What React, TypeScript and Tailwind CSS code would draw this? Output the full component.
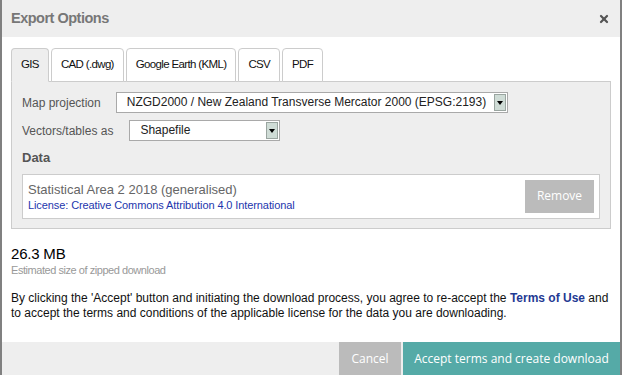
import { X } from "lucide-react";

const tabs = ["GIS", "CAD (.dwg)", "Google Earth (KML)", "CSV", "PDF"];

function SelectBox({ value, className }: { value: string; className: string }) {
    return (
        <div className={`flex h-[21px] items-stretch border border-[#a9a9a9] bg-white ${className}`}>
            <span className="flex-1 truncate pl-[10px] pr-1 text-[12px] leading-[19px] text-[#222]">{value}</span>
            <span className="m-px flex w-[12px] items-center justify-center border border-[#9aa5a0] bg-[#cfdcd6]">
                <span className="border-x-[3px] border-t-[4px] border-x-transparent border-t-black" />
            </span>
        </div>
    );
}

export default function App() {
    return (
        <div className="flex h-[375px] w-[622px] flex-col border-x-2 border-[#808080] bg-white font-['Liberation_Sans',Arial,sans-serif]">
            <div className="flex h-[37px] shrink-0 items-center justify-between bg-[#eeeeee] pl-[9px] pr-[10px]">
                <h1 className="text-[14.5px] font-bold tracking-[-0.5px] text-[#777]">Export Options</h1>
                <X className="h-[12px] w-[12px] text-[#555]" strokeWidth={4.5} />
            </div>

            <div className="flex flex-col px-[9px] pt-[11px]">
                <div className="flex gap-[2px]">
                    {tabs.map((t, i) => (
                        <div
                            key={t}
                            className={`relative -mb-px flex h-[34px] items-center rounded-t-[4px] border border-[#ccc] px-[9px] text-[11.5px] tracking-[-0.65px] text-[#111] ${
                                i === 0 ? "border-b-[#eee] bg-[#eeeeee]" : "bg-white"
                            }`}
                        >
                            {t}
                        </div>
                    ))}
                </div>
                <div className="flex flex-col border border-[#ccc] bg-[#eeeeee] px-[10px] pb-[9px] pt-[10px]">
                    <div className="flex items-center gap-[15px]">
                        <span className="text-[12px] text-[#555]">Map projection</span>
                        <SelectBox value="NZGD2000 / New Zealand Transverse Mercator 2000 (EPSG:2193)" className="w-[392px]" />
                    </div>
                    <div className="mt-[7px] flex items-center gap-[16px]">
                        <span className="text-[12px] text-[#555]">Vectors/tables as</span>
                        <SelectBox value="Shapefile" className="w-[151px]" />
                    </div>
                    <div className="mt-[7px] text-[13px] font-bold text-[#555]">Data</div>
                    <div className="mt-[6px] flex items-center justify-between border border-[#ccc] bg-white py-[5px] pl-[5px] pr-[5px]">
                        <div className="flex flex-col">
                            <span className="text-[13px] leading-[17px] text-[#666]">Statistical Area 2 2018 (generalised)</span>
                            <span className="text-[11px] leading-[14px] tracking-[-0.1px] text-[#1d36ad]">
                                License: Creative Commons Attribution 4.0 International
                            </span>
                        </div>
                        <button className="h-[33px] w-[69px] bg-[#bbbbbb] font-['Open_Sans',sans-serif] text-[12px] text-white">
                            Remove
                        </button>
                    </div>
                </div>
            </div>

            <div className="flex flex-col px-[9px] pt-[15px]">
                <span className="text-[15px] leading-[19px] tracking-[-0.2px] text-black">26.3 MB</span>
                <span className="text-[11px] leading-[14px] tracking-[-0.45px] text-[#999]">
                    Estimated size of zipped download
                </span>
                <p className="mt-[14px] text-[12px] leading-[15px] text-[#111]">
                    By clicking the 'Accept' button and initiating the download process, you agree to re-accept the{" "}
                    <a className="font-bold text-[#1f3a93]">Terms of Use</a> and to accept the terms and conditions of the
                    applicable license for the data you are downloading.
                </p>
            </div>

            <div className="mt-auto flex h-[33px] shrink-0 justify-end gap-[2px] bg-[#eeeeee] font-['Open_Sans',sans-serif] text-[12px] text-white">
                <button className="w-[62px] bg-[#bbbbbb]">Cancel</button>
                <button className="w-[217px] bg-[#55aaa7]">Accept terms and create download</button>
            </div>
        </div>
    );
}
